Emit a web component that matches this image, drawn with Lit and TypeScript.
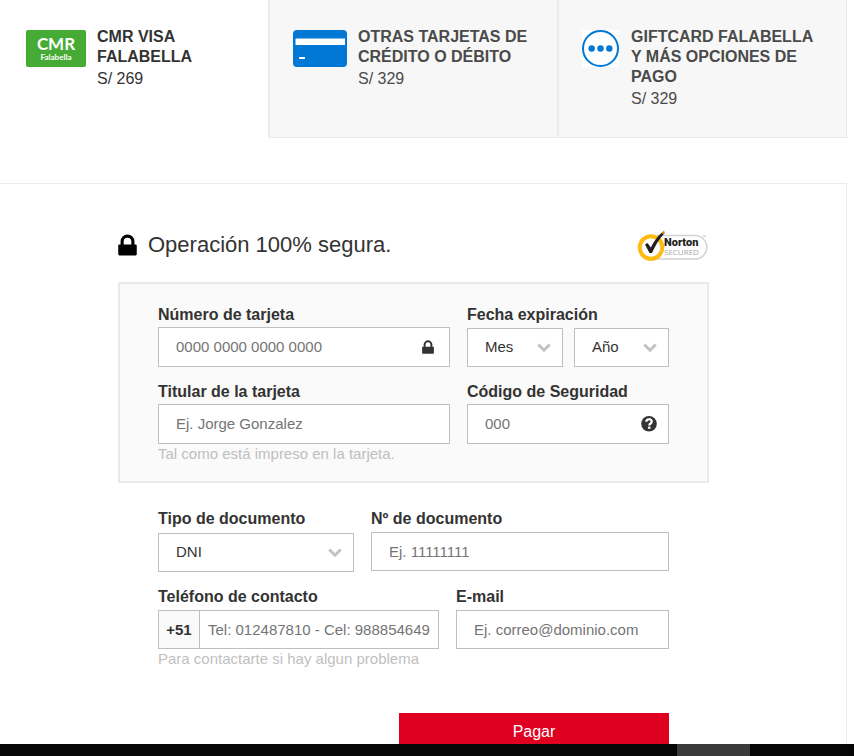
import { LitElement, html, css, svg, nothing } from "lit";
import { customElement, property, state } from "lit/decorators.js";
import { classMap } from "lit/directives/class-map.js";

const lock = svg`<path d="M1 9h1V6.500a5 5 0 0 1 12 0V9h1a1 1 0 0 1 1 1v7.500a1 1 0 0 1-1 1H1a1 1 0 0 1-1-1V10a1 1 0 0 1 1-1zM4.700 9h6.600V6.500a3.300 3.300 0 0 0-6.600 0z" fill="currentColor"/>`;

const cmrLogo = html`<svg width="60" height="37" viewBox="0 0 60 37" aria-hidden="true">
  <rect width="60" height="37" rx="2" fill="#46ab35" />
  <text class="logo" x="30" y="20" font-size="17" font-weight="700" text-anchor="middle" fill="#fff">CMR</text>
  <text class="logo" x="30" y="30" font-size="8" font-weight="700" text-anchor="middle" fill="#fff">Falabella</text>
</svg>`;

const cardIcon = html`<svg width="54" height="37" viewBox="0 0 54 37" aria-hidden="true">
  <rect width="54" height="37" rx="4" fill="#0078d4" />
  <rect x="2.500" y="8.500" width="49.500" height="6.500" fill="#fff" />
  <rect x="6" y="27" width="6" height="2" rx=".5" fill="#fff" />
</svg>`;

const moreIcon = html`<svg width="38" height="37" viewBox="0 0 38 37" aria-hidden="true">
  <rect width="37" height="37" fill="#fff" />
  <circle cx="18.500" cy="18.500" r="17.500" fill="#fff" stroke="#0078d4" stroke-width="2" />
  <circle cx="9.700" cy="18.500" r="3.200" fill="#0078d4" />
  <circle cx="18.500" cy="18.500" r="3.200" fill="#0078d4" />
  <circle cx="27.300" cy="18.500" r="3.200" fill="#0078d4" />
</svg>`;

const norton = html`<svg width="72" height="32" viewBox="0 -2 72 32" role="img" aria-label="Norton Secured">
  <path d="M20 4.500H58a11.800 11.800 0 0 1 0 23.600H20" fill="#fff" stroke="#d2d2d2" stroke-width="1.500" />
  <circle cx="14" cy="16.500" r="11.300" fill="#fff" stroke="#fdbb13" stroke-width="4" />
  <path d="M8 13.500l2.500-1.500 3.300 4.500C17 10.500 20.500 5 25.500 1l2 1.200C22 8 18.500 14 15 22h-2.500z" fill="#231f20" />
  <path d="M24.500 2l2.500-2.500.8 2.500-1.500 1.500z" fill="#c78f22" />
  <text class="brand" x="27" y="15" font-size="11" font-weight="900" fill="#231f20">Norton</text>
  <text class="seal" x="27" y="24" font-size="8" fill="#a9a9a9">SECURED</text>
  <path d="M66 5h3" stroke="#bbb" />
</svg>`;

const chevron = html`<svg class="chevron" width="14" height="10" viewBox="0 0 14 10" aria-hidden="true">
  <path d="M1.300 1.500L7 7.200l5.700-5.700" fill="none" stroke="#c2c2c2" stroke-width="3" />
</svg>`;

const tabs = [
  { title: "CMR VISA FALABELLA", price: "S/ 269", icon: cmrLogo },
  { title: "OTRAS TARJETAS DE CRÉDITO O DÉBITO", price: "S/ 329", icon: cardIcon },
  { title: "GIFTCARD FALABELLA Y MÁS OPCIONES DE PAGO", price: "S/ 329", icon: moreIcon },
];

const controls = css`
  * { box-sizing: border-box; }
  .field { display: flex; flex-direction: column; min-width: 0; }
  label, .legend { font-weight: 700; font-size: 16px; line-height: 22px; color: #333; white-space: nowrap; }
  .box {
    display: flex; align-items: center; height: var(--control-height, 39px);
    margin-top: var(--label-gap, 2px); border: 1px solid #bfbfbf; background: #fff; color: #333;
  }
  .hint { margin: 0; font-size: 15px; line-height: 20px; color: #bfbfbf; white-space: nowrap; }
`;

@customElement("text-field")
class TextField extends LitElement {
  @property() label = "";
  @property() placeholder = "";
  @property() icon = "";
  @property() prefixText = "";
  @property() hint = "";

  static styles = [controls, css`
    :host { display: block; min-width: 0; }
    input {
      flex: 1; min-width: 0; align-self: stretch; border: 0; outline: 0; background: none;
      padding: 0 0 1px 17px; font: 15px "Liberation Sans", Arial, sans-serif; color: #333;
    }
    input::placeholder { color: #757575; opacity: 1; }
    .prefix {
      display: flex; align-items: center; justify-content: center; align-self: stretch; width: 41px;
      border-right: 1px solid #bfbfbf; background: #fafafa; font-weight: 700; font-size: 15px;
    }
    .prefix + input { padding-left: 8px; }
    .lock { margin-right: 15px; }
    .help { margin-right: 11px; }
  `];

  render() {
    return html`<div class="field">
      <label for="control">${this.label}</label>
      <div class="box">
        ${this.prefixText ? html`<span class="prefix">${this.prefixText}</span>` : nothing}
        <input id="control" placeholder=${this.placeholder} />
        ${this.icon === "lock" ? html`<svg class="lock" width="12" height="14" viewBox="0 0 16 19" aria-hidden="true">${lock}</svg>` : nothing}
        ${this.icon === "help" ? html`<svg class="help" width="16" height="16" viewBox="0 0 16 16" aria-hidden="true">
          <circle cx="8" cy="7.800" r="7.800" fill="#333" />
          <path d="M5.300 5.800C5.300 2.400 10.800 2.400 10.800 5.600 10.800 7.600 8.300 7.400 8.300 9.500" fill="none" stroke="#fff" stroke-width="2.200" />
          <rect x="7.100" y="10.600" width="2.400" height="2.200" fill="#fff" />
        </svg>` : nothing}
      </div>
      ${this.hint ? html`<p class="hint">${this.hint}</p>` : nothing}
    </div>`;
  }
}

@customElement("select-field")
class SelectField extends LitElement {
  @property() label = "";
  @property() name = "";
  @property({ type: Array }) options: string[] = [];

  static styles = [controls, css`
    :host { display: block; min-width: 0; }
    .box { display: grid; grid-template: 100% / 100%; height: 39px; }
    select, .chevron { grid-area: 1 / 1; }
    select {
      height: 100%; width: 100%; appearance: none; border: 0; outline: 0; background: none;
      padding: 0 32px 2px 17px; font: 15px "Liberation Sans", Arial, sans-serif; color: #333;
    }
    .chevron { justify-self: end; margin-right: 11px; pointer-events: none; }
    .flush { margin-top: 0; }
    .lower { margin-top: 3px; }
  `];

  render() {
    return html`<div class="field">
      ${this.label ? html`<label for="control">${this.label}</label>` : nothing}
      <div class=${classMap({ box: true, flush: !this.label, lower: !!this.label })}>
        <select id="control" aria-label=${this.label || this.name}>
          ${this.options.map((o) => html`<option>${o}</option>`)}
        </select>
        ${chevron}
      </div>
    </div>`;
  }
}

@customElement("app-root")
class AppRoot extends LitElement {
  @state() private selected = 0;

  static styles = [controls, css`
    :host {
      display: flex; flex-direction: column; height: 100vh; overflow: hidden;
      background: #fff; color: #333; font-family: "Liberation Sans", Arial, sans-serif;
    }
    main { flex: 1; min-height: 0; overflow: hidden; display: flex; flex-direction: column; padding-right: 7px; }
    .tabs { display: grid; grid-template-columns: 268fr 289fr 290fr; flex: none; margin-bottom: 45px; }
    .tab {
      display: flex; align-items: flex-start; gap: 11px; min-height: 138px; text-align: left;
      padding: 30px 24px 26px 23px; border: 0 solid #eaeaea; border-width: 0 0 1px 2px;
      background: #f7f7f7; color: #4a4a4a; font: 16px/20px "Liberation Sans", Arial, sans-serif; cursor: pointer;
    }
    .tab:last-child { border-right-width: 1px; }
    .tab.active { background: #fff; color: #333; border-color: transparent; padding-left: 24px; }
    .tab svg { flex: none; }
    .tab-text { display: flex; flex-direction: column; gap: 2px; margin-top: -3px; }
    .logo { font-family: Lato, "Open Sans", sans-serif; }
    .brand { font-family: Roboto, "Open Sans", sans-serif; }
    .seal { font-family: "Open Sans", sans-serif; }
    .panel { flex: 1 0 auto; border: 1px solid #eaeaea; border-width: 1px 1px 0 0; padding: 45px 137px 0 118px; }
    .heading { display: flex; align-items: center; height: 32px; }
    h1 { flex: 1; margin: 0 0 0 11px; font-size: 22px; line-height: 32px; font-weight: 400; }
    .heading-lock { color: #000; }
    .card {
      margin-top: 21px; padding: 20px 38px 17px; border: 2px solid #eaeaea; background: #fafafa;
      --control-height: 40px; --label-gap: 1px;
    }
    .row { display: grid; column-gap: 17px; }
    .row + .row { margin-top: 14px; }
    .card .row { grid-template-columns: 292fr 202fr; }
    .details { padding: 25px 40px 0; }
    .document { grid-template-columns: 196fr 298fr; }
    .contact { grid-template-columns: 281fr 213fr; }
    .expiry { border: 0; margin: 0; padding: 0; min-width: 0; }
    .pair { display: grid; grid-template-columns: 96fr 95fr; gap: 11px; margin-top: 2px; }
    .legend { padding: 0; }
    .pay {
      display: block; width: 270px; height: 38px; margin: 44px 0 0 auto; border: 0; background: #df0021;
      color: #fff; font: 16px "Liberation Sans", Arial, sans-serif; cursor: pointer;
    }
    footer { flex: none; height: 12px; background: #060606; display: grid; grid-template-columns: 677fr 73fr 104fr; }
    .task { grid-column: 2; background: #3a3a3a; }
  `];

  render() {
    return html`
      <main>
        <div class="tabs" role="tablist">
          ${tabs.map((t, i) => html`<button type="button" role="tab" aria-selected=${i === this.selected}
            class=${classMap({ tab: true, active: i === this.selected })} @click=${() => (this.selected = i)}>
            ${t.icon}<span class="tab-text"><strong>${t.title}</strong><span>${t.price}</span></span>
          </button>`)}
        </div>
        <form class="panel" @submit=${(e: Event) => e.preventDefault()}>
          <div class="heading">
            <svg class="heading-lock" width="19" height="22" viewBox="0 0 16 19" aria-hidden="true">${lock}</svg>
            <h1>Operación 100% segura.</h1>
            ${norton}
          </div>
          <div class="card">
            <div class="row">
              <text-field label="Número de tarjeta" placeholder="0000 0000 0000 0000" icon="lock"></text-field>
              <fieldset class="expiry">
                <legend class="legend">Fecha expiración</legend>
                <div class="pair">
                  <select-field name="Mes" .options=${["Mes", "01", "02", "03", "04", "05", "06", "07", "08", "09", "10", "11", "12"]}></select-field>
                  <select-field name="Año" .options=${["Año"]}></select-field>
                </div>
              </fieldset>
            </div>
            <div class="row">
              <text-field label="Titular de la tarjeta" placeholder="Ej. Jorge Gonzalez" hint="Tal como está impreso en la tarjeta."></text-field>
              <text-field label="Código de Seguridad" placeholder="000" icon="help"></text-field>
            </div>
          </div>
          <div class="details">
            <div class="row document">
              <select-field label="Tipo de documento" .options=${["DNI"]}></select-field>
              <text-field label="Nº de documento" placeholder="Ej. 11111111"></text-field>
            </div>
            <div class="row contact">
              <text-field label="Teléfono de contacto" prefixText="+51" placeholder="Tel: 012487810 - Cel: 988854649" hint="Para contactarte si hay algun problema"></text-field>
              <text-field label="E-mail" placeholder="Ej. correo@dominio.com"></text-field>
            </div>
            <button class="pay">Pagar</button>
          </div>
        </form>
      </main>
      <footer><span class="task"></span></footer>
    `;
  }
}
